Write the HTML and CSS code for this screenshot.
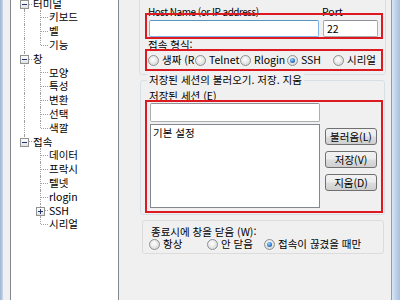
FILE: index.html
```html
<!DOCTYPE html>
<html lang="ko">
<head>
    <meta charset="UTF-8">
    <meta name="viewport" content="width=device-width, initial-scale=1.0">
    <title>PuTTY 구성</title>
    <link rel="stylesheet" href="styles.css">
</head>
<body>
    <div class="window">
        <div class="frame-left"></div>

        <div class="tree-wrap">
            <ul class="tree">
                <li class="row"><span class="c t"><i class="box"></i></span><span class="label">터미널</span></li>
                <li class="row"><span class="c v"></span><span class="c t"></span><span class="label">키보드</span></li>
                <li class="row"><span class="c v"></span><span class="c t"></span><span class="label">벨</span></li>
                <li class="row"><span class="c v"></span><span class="c l"></span><span class="label">기능</span></li>
                <li class="row"><span class="c t"><i class="box"></i></span><span class="label">창</span></li>
                <li class="row"><span class="c v"></span><span class="c t"></span><span class="label">모양</span></li>
                <li class="row"><span class="c v"></span><span class="c t"></span><span class="label">특성</span></li>
                <li class="row"><span class="c v"></span><span class="c t"></span><span class="label">변환</span></li>
                <li class="row"><span class="c v"></span><span class="c t"></span><span class="label">선택</span></li>
                <li class="row"><span class="c v"></span><span class="c l"></span><span class="label">색깔</span></li>
                <li class="row"><span class="c l"><i class="box"></i></span><span class="label">접속</span></li>
                <li class="row"><span class="c"></span><span class="c t"></span><span class="label">데이터</span></li>
                <li class="row"><span class="c"></span><span class="c t"></span><span class="label">프락시</span></li>
                <li class="row"><span class="c"></span><span class="c t"></span><span class="label">텔넷</span></li>
                <li class="row"><span class="c"></span><span class="c t"></span><span class="label">rlogin</span></li>
                <li class="row"><span class="c"></span><span class="c t"><i class="box plus"></i></span><span class="label">SSH</span></li>
                <li class="row"><span class="c"></span><span class="c l"></span><span class="label">시리얼</span></li>
            </ul>
        </div>

        <div class="panel">
            <div class="group g-host">
                <div class="host-labels">
                    <span class="host-lbl">Host Name (or IP address)</span>
                    <span>Port</span>
                </div>
                <div class="host-inputs">
                    <input class="field host focus" type="text">
                    <input class="field port" type="text" value="22">
                </div>
                <div class="lbl">접속 형식:</div>
                <div class="radios proto">
                    <label class="radio w47"><i class="dot"></i><span>생짜 (R)</span></label>
                    <label class="radio w45"><i class="dot"></i><span>Telnet</span></label>
                    <label class="radio w47"><i class="dot"></i><span>Rlogin</span></label>
                    <label class="radio w46 on"><i class="dot"></i><span>SSH</span></label>
                    <label class="radio w43"><i class="dot"></i><span>시리얼</span></label>
                </div>
                <div class="mark mark-host"></div>
                <div class="mark mark-proto"></div>
            </div>

            <div class="group g-sess">
                <div class="title">저장된 세션의 불러오기. 저장. 지움</div>
                <div class="lbl sess-lbl">저장된 세션 (E)</div>
                <input class="field sess" type="text">
                <div class="sess-row">
                    <div class="list">
                        <div class="item">기본 설정</div>
                    </div>
                    <div class="btns">
                        <button>불러옴(L)</button>
                        <button>저장(V)</button>
                        <button>지움(D)</button>
                    </div>
                </div>
                <div class="mark mark-sess"></div>
            </div>

            <div class="group g-close">
                <div class="lbl">종료시에 창을 닫음 (W):</div>
                <div class="radios exit">
                    <label class="radio w58"><i class="dot"></i><span>항상</span></label>
                    <label class="radio w57"><i class="dot"></i><span>안 닫음</span></label>
                    <label class="radio on"><i class="dot"></i><span>접속이 끊겼을 때만</span></label>
                </div>
            </div>
        </div>

        <div class="frame-right"></div>
    </div>
</body>
</html>
```

FILE: styles.css
```css
* {
    margin: 0;
    padding: 0;
    box-sizing: border-box;
}

body {
    width: 400px;
    height: 300px;
    overflow: hidden;
    background: #f0f0f0;
    font-family: "Noto Sans CJK KR", "Liberation Sans", sans-serif;
    font-size: 10.5px;
    color: #000;
}

.window {
    display: flex;
    height: 300px;
}

.frame-left {
    width: 3px;
    flex: none;
    background: linear-gradient(90deg, #9db4d0, #c8d8ea);
}

.frame-right {
    width: 9px;
    flex: none;
    border-left: 1px solid #9a9a9a;
    background: linear-gradient(90deg, #dbe7f4, #b8cde6 60%, #a9c0dc);
}

/* category tree */
.tree-wrap {
    width: 109px;
    flex: none;
    margin-left: 7px;
    background: #fff;
    border-left: 1px solid #828790;
    border-right: 1px solid #828790;
    overflow: hidden;
}

.tree {
    list-style: none;
    margin-top: -3.4px;
    padding-left: 5px;
}

.row {
    display: flex;
    height: 13.8px;
    line-height: 13.8px;
    white-space: nowrap;
}

.c {
    position: relative;
    width: 16px;
    height: 100%;
    flex: none;
}

.c.v::before,
.c.t::before,
.c.l::before {
    content: "";
    position: absolute;
    left: 8px;
    top: 0;
    bottom: 0;
    border-left: 1px dotted #a0a0a0;
}

.c.l::before {
    bottom: 50%;
}

.c.t::after,
.c.l::after {
    content: "";
    position: absolute;
    left: 9px;
    right: 0;
    top: 50%;
    border-top: 1px dotted #a0a0a0;
}

.box {
    position: absolute;
    left: 4px;
    top: 3px;
    width: 9px;
    height: 9px;
    border: 1px solid #919191;
    background: linear-gradient(#ffffff, #e2e2e2);
    z-index: 1;
}

.box::before {
    content: "";
    position: absolute;
    left: 1px;
    top: 3px;
    width: 5px;
    height: 1px;
    background: #23356e;
}

.box.plus::after {
    content: "";
    position: absolute;
    left: 3px;
    top: 1px;
    width: 1px;
    height: 5px;
    background: #23356e;
}

.label {
    margin-left: 1px;
}

/* right panel */
.panel {
    flex: 1;
    display: flex;
    flex-direction: column;
}

.group {
    position: relative;
    border: 1px solid #d5dfe5;
    border-radius: 3px;
    line-height: 12px;
}

.lbl {
    height: 12px;
}

.g-host {
    margin: -6px 0 0 20px;
    width: 247px;
    padding: 11px 0 7px 8px;
}

.host-labels {
    display: flex;
    height: 12px;
}

.host-lbl {
    width: 174px;
    font-size: 10px;
    letter-spacing: -0.5px;
}

.host-inputs {
    display: flex;
    gap: 4px;
    margin: 2px 0 2px 1px;
}

.field {
    display: block;
    height: 17px;
    border: 1px solid #abadb3;
    border-top-color: #8e9198;
    border-radius: 2px;
    background: #fff;
    font: inherit;
    padding: 0 3px;
    outline: none;
}

.field.focus {
    border-color: #7eb4ea;
    border-top-color: #5794bf;
}

.host {
    width: 170px;
}

.port {
    width: 55px;
}

.radios {
    display: flex;
    height: 14px;
    margin-top: 2px;
}

.radio {
    display: flex;
    align-items: center;
    flex: none;
    height: 100%;
    overflow: hidden;
    white-space: nowrap;
}

.w43 { width: 43px; }
.w45 { width: 45px; }
.w46 { width: 46px; }
.w47 { width: 47px; }
.w57 { width: 57px; }
.w58 { width: 58px; }

.dot {
    position: relative;
    width: 11px;
    height: 11px;
    flex: none;
    margin-right: 3px;
    border: 1px solid #8e8f8f;
    border-radius: 50%;
    background: radial-gradient(circle at 45% 40%, #ffffff 0%, #eaeaea 45%, #c9c9c9 100%);
}

.radio.on .dot::after {
    content: "";
    position: absolute;
    left: 2px;
    top: 2px;
    width: 5px;
    height: 5px;
    border-radius: 50%;
    background: radial-gradient(circle at 40% 35%, #a6dcff 0%, #3d8ad8 45%, #123f86 100%);
}

.g-sess {
    margin: 5px 0 0 21px;
    width: 245px;
    padding: 0 0 6px 8px;
}

.title {
    width: fit-content;
    margin: -7px 0 0 -2px;
    padding: 0 2px;
    background: #f0f0f0;
}

.sess-lbl {
    margin-top: 4px;
}

.sess {
    width: 170px;
    height: 19px;
    margin: 1px 0 0 1px;
}

.sess-row {
    display: flex;
    margin: 2px 0 0 1px;
}

.list {
    width: 170px;
    height: 84px;
    background: #fff;
    border: 1px solid #828790;
    padding: 2px 2px;
}

.btns {
    display: flex;
    flex-direction: column;
    gap: 6px;
    margin-left: 5px;
    padding-top: 4px;
}

button {
    width: 52px;
    height: 17px;
    border: 1px solid #707070;
    border-radius: 3px;
    background: linear-gradient(#f2f2f2 0%, #ebebeb 48%, #dddddd 52%, #cfcfcf 100%);
    font: inherit;
    line-height: 14px;
    color: #000;
}

.g-close {
    margin: 5px 0 0 23px;
    width: 242px;
    padding: 5px 0 3px 8px;
    border-color: #dcdcdc;
}

.exit {
    height: 12px;
    margin: 0 0 0 -2px;
    line-height: 12px;
}

.exit .radio {
    overflow: visible;
}

/* red highlight frames drawn over the dialog */
.mark {
    position: absolute;
    border: 2px solid #dd1a22;
    pointer-events: none;
}

.mark-host {
    left: 5px;
    top: 18px;
    width: 238px;
    height: 26px;
}

.mark-proto {
    left: 5px;
    top: 54px;
    width: 238px;
    height: 22px;
}

.mark-sess {
    left: 4px;
    top: 19px;
    width: 238px;
    height: 113px;
}
```
